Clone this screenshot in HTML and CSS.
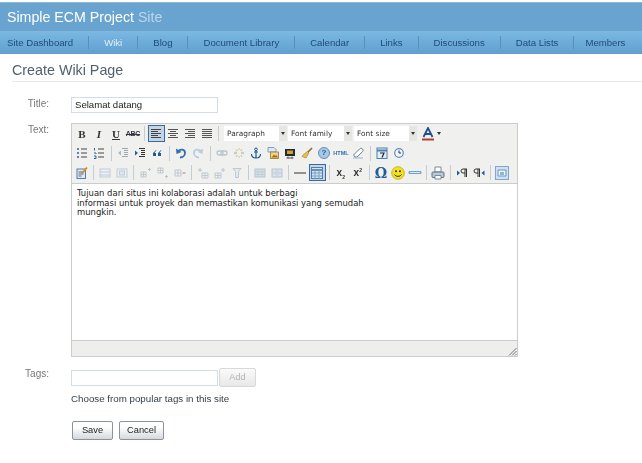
FILE: index.html
```html
<!DOCTYPE html>
<html lang="id">
<head>
<meta charset="utf-8">
<title>Create Wiki Page</title>
<link rel="stylesheet" href="styles.css">
</head>
<body>
<svg class="defs" width="0" height="0" aria-hidden="true">
  <symbol id="al" viewBox="0 0 12 12"><path d="M1 1.500h10M1 3.500h7M1 5.500h10M1 7.500h7M1 9.500h10" stroke="#444" fill="none"/></symbol>
  <symbol id="ac" viewBox="0 0 12 12"><path d="M1 1.500h10M3 3.500h6M1 5.500h10M3 7.500h6M1 9.500h10" stroke="#555" fill="none"/></symbol>
  <symbol id="ar" viewBox="0 0 12 12"><path d="M1 1.500h10M4 3.500h7M1 5.500h10M4 7.500h7M1 9.500h10" stroke="#555" fill="none"/></symbol>
  <symbol id="aj" viewBox="0 0 12 12"><path d="M1 1.500h10M1 3.500h10M1 5.500h10M1 7.500h10M1 9.500h10" stroke="#555" fill="none"/></symbol>
  <symbol id="ul" viewBox="0 0 12 12"><path d="M1 2h2M1 6h2M1 10h2" stroke="#2a5f9e" fill="none" stroke-width="1.600"/><path d="M5 2h6M5 6h6M5 10h6" stroke="#444" fill="none"/></symbol>
  <symbol id="ol" viewBox="0 0 12 12"><path d="M1.500 1v2.500M1 6h2v1M1 9h2v2.500H1" stroke="#2a5f9e" fill="none"/><path d="M5 2h6M5 6h6M5 10h6" stroke="#444" fill="none"/></symbol>
  <symbol id="ou" viewBox="0 0 12 12"><path d="M5 1.500h6M7 3.500h4M7 5.500h4M7 7.500h4M5 9.500h6" stroke="#a0a8b0" fill="none"/><path d="M4 3.500 1 6l3 2.500z" fill="#aab8c8"/></symbol>
  <symbol id="in" viewBox="0 0 12 12"><path d="M5 1.500h6M7 3.500h4M7 5.500h4M7 7.500h4M5 9.500h6" stroke="#333" fill="none"/><path d="M1 3.500 4 6 1 8.500z" fill="#2a5f9e"/></symbol>
  <symbol id="qt" viewBox="0 0 12 12"><path d="M5 3 2 6v3h3V6H3.500L5.500 3zM10 3 7 6v3h3V6H8.500L10.500 3z" fill="#1f5d99"/></symbol>
  <symbol id="un" viewBox="0 0 12 12"><path d="M3 4.500C5 1.500 10 2 10 6c0 3-2.500 4.500-5 4.500" stroke="#2f6fb0" fill="none" stroke-width="1.800"/><path d="M1 1.500 1.500 7 6.500 5z" fill="#2f6fb0"/></symbol>
  <symbol id="re" viewBox="0 0 12 12"><path d="M9 4.500C7 1.500 2 2 2 6c0 3 2.500 4.500 5 4.500" stroke="#b8cde0" fill="none" stroke-width="1.800"/><path d="M11 1.500 10.500 7 5.500 5z" fill="#b8cde0"/></symbol>
  <symbol id="lk" viewBox="0 0 12 12"><rect x="1" y="4" width="6" height="4" rx="2" stroke="#b9c4cf" fill="none" stroke-width="1.300"/><rect x="5" y="4" width="6" height="4" rx="2" stroke="#b9c4cf" fill="none" stroke-width="1.300"/></symbol>
  <symbol id="ulk" viewBox="0 0 12 12"><path d="M1 6h3M8 6h3" stroke="#c4ccd4" stroke-width="2.500"/><path d="M6 1v2M6 9v2M3 2l1.500 2M9 2 7.500 4M3 10l1.500-2M9 10 7.500 8" stroke="#d0c890" fill="none"/></symbol>
  <symbol id="an" viewBox="0 0 12 12"><circle cx="6" cy="2.300" r="1.300" stroke="#1f5d99" fill="none"/><path d="M6 3.500V11M4 5h4M1.500 7c0 2.500 2 4 4.500 4s4.500-1.500 4.500-4" stroke="#1f5d99" fill="none" stroke-width="1.200"/></symbol>
  <symbol id="im" viewBox="0 0 12 12"><path d="M1 .5h6l2 2V5H1z" fill="#dce8f4" stroke="#6a8fb8" stroke-width=".8"/><rect x="3.500" y="5" width="8" height="6.500" fill="#f3d27a" stroke="#8a7a3a" stroke-width=".8"/><path d="M4.500 10.500 7 7.500l1.500 1.500 1-1 1.500 2.500z" fill="#b06a20"/></symbol>
  <symbol id="md" viewBox="0 0 12 12"><rect x="1" y="2" width="10" height="7" fill="#1d2a38"/><rect x="3" y="3.500" width="6" height="3.500" fill="#d8a020"/><path d="M4 9.500v2M8 9.500v2M2.500 11h7" stroke="#555"/></symbol>
  <symbol id="cl" viewBox="0 0 12 12"><path d="M11 1 6 6" stroke="#8a6a30" stroke-width="1.600"/><path d="M6.500 4.500 8 6 5 11 1 9.500 2.500 7.500z" fill="#e6c24a" stroke="#9a8030" stroke-width=".6"/></symbol>
  <symbol id="er" viewBox="0 0 12 12"><path d="M1.500 8 7.500 2c1-1 2-1 3 0 .8.800.8 1.800 0 2.700L5 10H3z" fill="#fff" stroke="#6b7f94"/><path d="M1 11h10" stroke="#9db3c8"/></symbol>
  <symbol id="dt" viewBox="0 0 12 12"><rect x="1" y="1" width="10" height="10.500" fill="#e4eef8" stroke="#4f7fae"/><path d="M1 3.500h10" stroke="#4f7fae" stroke-width="2"/><path d="M4 6h4L6 10.500" stroke="#223" fill="none" stroke-width="1.200"/></symbol>
  <symbol id="tm" viewBox="0 0 12 12"><circle cx="6" cy="6" r="4.300" fill="#eef4fa" stroke="#5e8fbe" stroke-width="1.200"/><path d="M6 3.500V6h2" stroke="#334" fill="none"/></symbol>
  <symbol id="ed" viewBox="0 0 12 12"><rect x="1" y="2" width="8.500" height="9.500" fill="#dfe9f5" stroke="#4f7fae"/><path d="M2.500 5h5M2.500 7h5M2.500 9h3" stroke="#5a6a7a"/><path d="M11 .5 6 6.500" stroke="#d88a20" stroke-width="1.800"/></symbol>
  <symbol id="t1" viewBox="0 0 12 12"><rect x="1" y="2" width="10" height="8" fill="#eef1f4" stroke="#c0ccd8"/><path d="M1 5h10M1 8h10" stroke="#c0ccd8"/></symbol>
  <symbol id="t2" viewBox="0 0 12 12"><rect x="1" y="2" width="10" height="8" fill="#eef1f4" stroke="#c0ccd8"/><rect x="3.500" y="4" width="5" height="4" fill="#dfe6ee" stroke="#c0ccd8"/></symbol>
  <symbol id="r1" viewBox="0 0 12 12"><path d="M1 5h5v5H1zM1 7.500h5M3.500 5v5" fill="none" stroke="#c0c8d0"/><path d="M8 2.500h3M9.500 1v3" stroke="#b8c4cf"/></symbol>
  <symbol id="r2" viewBox="0 0 12 12"><path d="M1 1h5v5H1zM1 3.500h5M3.500 1v5" fill="none" stroke="#c0c8d0"/><path d="M8 9.500h3M9.500 8v3" stroke="#b8c4cf"/></symbol>
  <symbol id="r3" viewBox="0 0 12 12"><path d="M1 3h6v6H1zM1 6h6M4 3v6" fill="none" stroke="#c0c8d0"/><path d="M8.500 6h3" stroke="#b8a8a8" stroke-width="1.500"/></symbol>
  <symbol id="c1" viewBox="0 0 12 12"><path d="M3 1v4M1 3h4" stroke="#b8c4cf"/><path d="M5 6h6v5H5zM8 6v5M5 8.500h6" fill="none" stroke="#c0c8d0"/></symbol>
  <symbol id="c2" viewBox="0 0 12 12"><path d="M9 1v4M7 3h4" stroke="#b8c4cf"/><path d="M1 6h6v5H1zM4 6v5M1 8.500h6" fill="none" stroke="#c0c8d0"/></symbol>
  <symbol id="c3" viewBox="0 0 12 12"><path d="M2 1.500h8l-2.500 3v6h-3v-6z" fill="#e6eaee" stroke="#c0c8d0"/></symbol>
  <symbol id="m1" viewBox="0 0 12 12"><rect x="1" y="2" width="10" height="8" fill="#d6dfe8" stroke="#b8c4d0"/><path d="M1 5h10M1 7.500h10M4 2v8M8 2v8" stroke="#c2ccd6"/></symbol>
  <symbol id="m2" viewBox="0 0 12 12"><rect x="1" y="2" width="10" height="8" fill="#dae2ea" stroke="#b8c4d0"/><path d="M1 6h10M6 2v8" stroke="#c2ccd6"/><path d="M4 4h4v4H4z" fill="#ccd6e0"/></symbol>
  <symbol id="hr" viewBox="0 0 12 12"><path d="M0 6h12" stroke="#333" stroke-width="1"/></symbol>
  <symbol id="tb" viewBox="0 0 14 14"><rect x="1.500" y="1.500" width="11" height="11" fill="#d4e4f2" stroke="#4f7fae"/><path d="M1.500 4h11" stroke="#5f8fbe" stroke-width="2"/><path d="M2 7h10M2 10h10M5 4v9M9 4v9" stroke="#7f9fbf"/></symbol>
  <symbol id="sm" viewBox="0 0 14 14"><circle cx="7" cy="7" r="6.300" fill="#f4e21c" stroke="#b8a820" stroke-width=".8"/><circle cx="5" cy="5.300" r="1" fill="#333"/><circle cx="9" cy="5.300" r="1" fill="#333"/><path d="M3.500 8.500c1.500 2.500 5.500 2.500 7 0" stroke="#333" fill="none"/></symbol>
  <symbol id="br" viewBox="0 0 14 14"><rect x=".5" y="5" width="13" height="3" rx="1" fill="#6fa3d0"/><path d="M2 6.500h10" stroke="#dfe8f0"/></symbol>
  <symbol id="pr" viewBox="0 0 14 14"><path d="M4 1h6v5H4z" fill="#fff" stroke="#7a8a9a"/><rect x="1" y="6" width="12" height="5.500" rx="1" fill="#bcc8d4" stroke="#5f7084"/><path d="M4 9.500h6v3.500H4z" fill="#fff" stroke="#7a8a9a"/></symbol>
  <symbol id="lt" viewBox="0 0 12 12"><path d="M1 3.500 4 6 1 8.500z" fill="#1f5d99"/><path d="M7 2h4M9 2v8M7 2a2 2 0 0 0 0 4h2M10.500 2v8" stroke="#333" fill="none"/></symbol>
  <symbol id="rt" viewBox="0 0 12 12"><path d="M11.500 3.500 8.500 6l3 2.500z" fill="#1f5d99"/><path d="M3 2h4M5 2v8M3 2a2 2 0 0 0 0 4h2M6.500 2v8" stroke="#333" fill="none"/></symbol>
  <symbol id="ls" viewBox="0 0 14 14"><rect x=".5" y=".5" width="13" height="13" fill="#cfe0f0" stroke="#7fa6cc"/><path d="M3 4h8v6H3z" fill="#eaf2fa" stroke="#6f97c0"/><path d="M5 6h4v3H5z" fill="#8fb4d8"/></symbol>
  <symbol id="fc" viewBox="0 0 14 14"><path d="M2.500 10 7 1l4.500 9M4.500 7h5" stroke="#1f4f8f" fill="none" stroke-width="1.800"/><path d="M1 12.500h12" stroke="#b04030" stroke-width="2"/></symbol>
</svg>

<header class="banner">
  <h1 class="site-title">Simple ECM Project <span class="site-word">Site</span></h1>
</header>
<nav class="nav">
  <a class="nav-item">Site Dashboard</a>
  <a class="nav-item current">Wiki</a>
  <a class="nav-item">Blog</a>
  <a class="nav-item">Document Library</a>
  <a class="nav-item">Calendar</a>
  <a class="nav-item">Links</a>
  <a class="nav-item">Discussions</a>
  <a class="nav-item">Data Lists</a>
  <a class="nav-item last">Members</a>
</nav>

<main class="page">
  <h2 class="page-title">Create Wiki Page</h2>
  <form class="form">
    <div class="field title-field">
      <span class="label">Title:</span>
      <div class="textbox title-box">Selamat datang</div>
    </div>
    <div class="field text-field">
      <span class="label">Text:</span>
      <div class="editor">
        <div class="toolbar">
          <div class="row">
            <span class="btn t-b">B</span><span class="btn t-i">I</span><span class="btn t-u">U</span><span class="btn t-s">ABC</span><i class="sep"></i>
            <span class="btn on"><svg class="ic"><use href="#al"/></svg></span><span class="btn"><svg class="ic"><use href="#ac"/></svg></span><span class="btn"><svg class="ic"><use href="#ar"/></svg></span><span class="btn"><svg class="ic"><use href="#aj"/></svg></span><i class="sep"></i>
            <span class="select s-para"><span class="sel-text">Paragraph</span><b class="sel-arrow"></b></span>
            <span class="select s-fam"><span class="sel-text">Font family</span><b class="sel-arrow"></b></span>
            <span class="select s-size"><span class="sel-text">Font size</span><b class="sel-arrow"></b></span>
            <span class="btn color"><svg class="ic lg"><use href="#fc"/></svg></span><b class="mini-arrow"></b>
          </div>
          <div class="row wide">
            <span class="btn"><svg class="ic"><use href="#ul"/></svg></span><span class="btn"><svg class="ic"><use href="#ol"/></svg></span><i class="sep"></i>
            <span class="btn"><svg class="ic"><use href="#ou"/></svg></span><span class="btn"><svg class="ic"><use href="#in"/></svg></span><span class="btn"><svg class="ic"><use href="#qt"/></svg></span><i class="sep"></i>
            <span class="btn"><svg class="ic"><use href="#un"/></svg></span><span class="btn"><svg class="ic"><use href="#re"/></svg></span><i class="sep"></i>
            <span class="btn"><svg class="ic"><use href="#lk"/></svg></span><span class="btn"><svg class="ic"><use href="#ulk"/></svg></span><span class="btn"><svg class="ic"><use href="#an"/></svg></span><span class="btn"><svg class="ic"><use href="#im"/></svg></span><span class="btn"><svg class="ic"><use href="#md"/></svg></span><span class="btn"><svg class="ic"><use href="#cl"/></svg></span><span class="btn"><span class="help">?</span></span><span class="btn t-html">HTML</span><span class="btn"><svg class="ic"><use href="#er"/></svg></span><i class="sep"></i>
            <span class="btn"><svg class="ic"><use href="#dt"/></svg></span><span class="btn"><svg class="ic"><use href="#tm"/></svg></span>
          </div>
          <div class="row">
            <span class="btn"><svg class="ic"><use href="#ed"/></svg></span><i class="sep"></i>
            <span class="btn"><svg class="ic"><use href="#t1"/></svg></span><span class="btn"><svg class="ic"><use href="#t2"/></svg></span><i class="sep"></i>
            <span class="btn"><svg class="ic"><use href="#r1"/></svg></span><span class="btn"><svg class="ic"><use href="#r2"/></svg></span><span class="btn"><svg class="ic"><use href="#r3"/></svg></span><i class="sep"></i>
            <span class="btn"><svg class="ic"><use href="#c1"/></svg></span><span class="btn"><svg class="ic"><use href="#c2"/></svg></span><span class="btn"><svg class="ic"><use href="#c3"/></svg></span><i class="sep"></i>
            <span class="btn"><svg class="ic"><use href="#m1"/></svg></span><span class="btn"><svg class="ic"><use href="#m2"/></svg></span><i class="sep"></i>
            <span class="btn"><svg class="ic"><use href="#hr"/></svg></span><span class="btn on"><svg class="ic lg"><use href="#tb"/></svg></span><i class="sep"></i>
            <span class="btn t-sub"><span>x<sub>2</sub></span></span><span class="btn t-sub"><span>x<sup>2</sup></span></span><i class="sep"></i>
            <span class="btn t-om">Ω</span><span class="btn"><svg class="ic lg"><use href="#sm"/></svg></span><span class="btn"><svg class="ic lg"><use href="#br"/></svg></span><i class="sep"></i>
            <span class="btn"><svg class="ic lg"><use href="#pr"/></svg></span><i class="sep"></i>
            <span class="btn"><svg class="ic"><use href="#lt"/></svg></span><span class="btn"><svg class="ic"><use href="#rt"/></svg></span><i class="sep"></i>
            <span class="btn"><svg class="ic lg"><use href="#ls"/></svg></span>
          </div>
        </div>
        <div class="content">
          <p>Tujuan dari situs ini kolaborasi adalah untuk berbagi<br>informasi untuk proyek dan memastikan komunikasi yang semudah<br>mungkin.</p>
        </div>
        <div class="statusbar">
          <svg class="grip" width="9" height="9" viewBox="0 0 9 9"><path d="M8.500 1 1 8.500M8.500 4 4 8.500M8.500 7 7 8.500" stroke="#777" fill="none"/></svg>
        </div>
      </div>
    </div>
    <div class="field tags-field">
      <span class="label">Tags:</span>
      <div class="tags-main">
        <div class="tags-input-row">
          <div class="textbox tags-box"></div>
          <span class="add-btn">Add</span>
        </div>
        <p class="popular">Choose from popular tags in this site</p>
      </div>
    </div>
    <div class="actions">
      <span class="action save">Save</span>
      <span class="action cancel">Cancel</span>
    </div>
  </form>
</main>
</body>
</html>
```
FILE: styles.css
```css
* { box-sizing: border-box; }
html, body { margin: 0; padding: 0; }
body {
  width: 642px;
  height: 463px;
  overflow: hidden;
  background: #fff;
  font-family: "Liberation Sans", Arial, sans-serif;
  color: #2c3640;
  padding-top: 2px;
  filter: blur(.3px);
}
.defs { position: absolute; }

.banner {
  height: 29px;
  background: #69a3cf;
  border-top: 1px solid #8fb5cc;
  padding-left: 7px;
  display: flex;
  align-items: center;
}
.site-title { margin: 0; font-size: 14.200px; font-weight: 400; color: #fff; white-space: nowrap; }
.site-word { color: #bcd6ea; }

.nav {
  height: 23px;
  display: flex;
  align-items: center;
  background: linear-gradient(#7ab7e2, #5f9fd0);
  border-top: 1px solid #80b8de;
  padding: 0 0 2px 7px;
}
.nav-item {
  flex: none;
  white-space: nowrap;
  font-size: 9.600px;
  color: #1f4c78;
  padding-right: 15px;
  margin-right: 15px;
  border-right: 1px solid #5a8fb8;
  line-height: 13px;
}
.nav-item.current { color: #e2eef8; }
.nav-item.last { border-right: 0; margin-right: 0; margin-left: -4px; }

.page-title {
  margin: 0 0 0 12px;
  height: 28px;
  padding-top: 7px;
  font-size: 14.300px;
  line-height: 18px;
  font-weight: 400;
  color: #525f6c;
  border-bottom: 1px solid #e8e8e8;
}

.form { padding-top: 15px; }
.field { display: flex; }
.label {
  width: 49px;
  margin-right: 22px;
  text-align: right;
  font-size: 10px;
  color: #777;
}
.textbox {
  width: 147px;
  height: 16px;
  border: 1px solid #d4dde6;
  background: #fff;
  font-size: 9.600px;
  line-height: 14px;
  padding-left: 3px;
  color: #222;
}
.title-field .label { padding-top: 1px; }
.text-field { margin-top: 10px; }
.text-field .label { padding-top: 1px; }

.editor {
  width: 447px;
  height: 234px;
  border: 1px solid #ccc;
  display: flex;
  flex-direction: column;
}
.toolbar {
  height: 60px;
  background: #f0f0ee;
  border-bottom: 1px solid #ccc;
  padding: 0 0 0 1.500px;
}
.row { display: flex; align-items: center; height: 19.600px; }
.btn {
  flex: none;
  width: 17px;
  height: 17px;
  display: flex;
  align-items: center;
  justify-content: center;
  font-size: 10px;
  color: #333;
}
.btn.on { background: #c4d6e6; border: 1px solid #3a6a99; }
.ic { width: 12px; height: 12px; display: block; }
.ic.lg { width: 14px; height: 14px; }
.sep { flex: none; width: 6.300px; display: flex; justify-content: center; height: 15px; }
.sep::after { content: ""; width: 1px; background: #c4ccd4; }
.wide .sep { width: 7px; }

.help {
  width: 12px;
  height: 12px;
  border-radius: 50%;
  border: 1px solid #5e8fbe;
  background: #a9c8e4;
  color: #1f5d99;
  font: bold 8px/10px "Liberation Sans", sans-serif;
  text-align: center;
}
.t-b { font: bold 11px "Liberation Serif", serif; color: #333; }
.t-i { font: italic bold 11px "Liberation Serif", serif; color: #333; }
.t-u { font: bold 11px "Liberation Serif", serif; color: #333; text-decoration: underline; }
.t-s { font: bold 7px "Liberation Sans", sans-serif; color: #334; letter-spacing: -.3px; text-decoration: line-through; }
.t-html { font: bold 5.500px "Liberation Sans", sans-serif; color: #2f6fb0; }
.t-sub { font: bold 10px/12px "Liberation Sans", sans-serif; color: #333; }
.t-sub sub, .t-sub sup { font-size: 5px; line-height: 0; }
.t-om { font: bold 14px "DejaVu Serif", serif; color: #1f5d99; }

.select {
  flex: none;
  height: 15px;
  width: 64px;
  margin-right: 1px;
  display: flex;
  background: #fff;
  font: 7.400px "DejaVu Sans", sans-serif;
  color: #333;
}
.s-para { width: 63px; margin-left: 2px; }
.s-fam { margin-right: 2px; }
.s-size { width: 63px; }
.sel-text { flex: 1; padding-left: 3px; line-height: 15px; }
.sel-arrow {
  width: 8px;
  background: #e6e6e4;
  display: flex;
  align-items: center;
  justify-content: center;
}
.sel-arrow::after, .mini-arrow::after {
  content: "";
  border-left: 2.500px solid transparent;
  border-right: 2.500px solid transparent;
  border-top: 3px solid #333;
}
.color { margin-left: 1.500px; }
.mini-arrow { display: flex; align-items: center; }

.content { flex: 1; background: #fff; padding: 5px 5px; }
.content p {
  margin: 0;
  font: 8.450px/9.600px "DejaVu Sans", Verdana, sans-serif;
  color: #222;
}
.statusbar {
  height: 16px;
  background: #eeeeec;
  border-top: 1px solid #ccc;
  display: flex;
  justify-content: flex-end;
  align-items: flex-end;
}
.grip { display: block; }

.tags-field { margin-top: 11px; }
.tags-main { display: flex; flex-direction: column; }
.tags-input-row { display: flex; align-items: center; }
.add-btn {
  width: 37px;
  height: 19px;
  margin-left: 1px;
  border: 1px solid #d8d8d8;
  border-radius: 2px;
  background: linear-gradient(#fafafa, #e8e8e8);
  color: #b4b4b4;
  font-size: 9.200px;
  line-height: 17px;
  text-align: center;
}
.popular { margin: 5px 0 0; font-size: 9.750px; line-height: 13px; color: #333e48; }

.actions { display: flex; gap: 6px; margin: 16px 0 0 72px; }
.action {
  height: 19px;
  border: 1px solid #8a94a0;
  border-radius: 2px;
  background: linear-gradient(#fff 30%, #d6d8dc);
  font-size: 9.300px;
  line-height: 17px;
  color: #222;
  text-align: center;
}
.save { width: 41px; }
.cancel { width: 45px; }
```
